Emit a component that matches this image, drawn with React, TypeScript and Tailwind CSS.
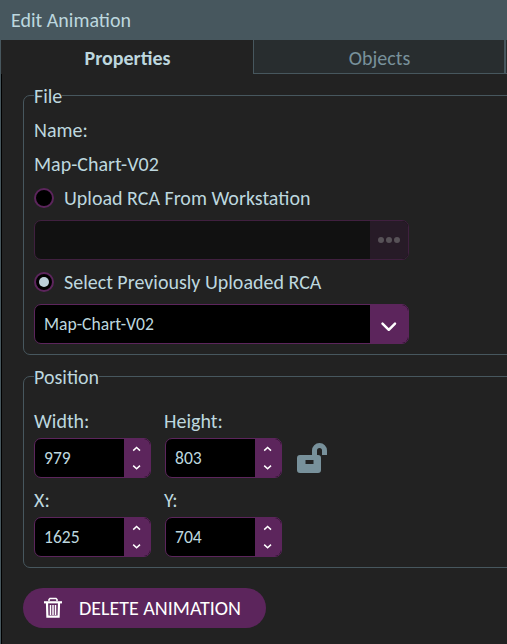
import React from "react";

function Spinner({ value }: { value: string }) {
  return (
    <div className="flex h-10 w-[117px] overflow-hidden rounded-[7px] border border-[#5c255c] bg-black">
      <div className="flex flex-1 items-center pt-[2px] pl-[9px] text-[17.6px] leading-none">{value}</div>
      <div className="flex w-[26px] flex-col items-center justify-between bg-[#5c255c] py-[7px]">
        <svg width="10" height="6" viewBox="0 0 10 6" fill="none" stroke="#fff" strokeWidth="1.5">
          <path d="M1.2 4.6 4.6 1.5l3.4 3.1" />
        </svg>
        <svg width="10" height="6" viewBox="0 0 10 6" fill="none" stroke="#fff" strokeWidth="1.5">
          <path d="M1.2 1.6 4.6 4.7 8 1.6" />
        </svg>
      </div>
    </div>
  );
}

function Radio({ checked }: { checked?: boolean }) {
  return (
    <span className="flex size-5 shrink-0 items-center justify-center rounded-full border-2 border-[#5c255c] bg-black">
      {checked && <span className="size-[10px] rounded-full bg-[#bdd0d9]" />}
    </span>
  );
}

function Field({ label, value }: { label: string; value: string }) {
  return (
    <div className="group flex w-[117px] flex-col gap-[5px]">
      <div className="-ml-px h-[22px] leading-[20px] group-first:ml-0">{label}</div>
      <Spinner value={value} />
    </div>
  );
}

export default function App() {
  return (
    <div className="h-[644px] w-[507px] overflow-hidden bg-[#222] font-['Carlito','Lato','Liberation_Sans',sans-serif] text-[20px] whitespace-nowrap text-[#bdd7df]">
      <header className="flex h-10 items-center bg-[#47575e] pl-[11px]">Edit Animation</header>
      <div className="h-[604px] border-l border-[#47575e]">
        <nav className="flex h-[34px]">
          <div className="flex w-[252px] items-center justify-center pt-px pl-px font-bold">Properties</div>
          <div className="flex w-[253px] items-center justify-center border-r-2 border-b border-l border-[#47575e] bg-[#282d2f] pt-[2px] pl-px text-[#78919b]">
            Objects
          </div>
          <div className="flex-1 border-b border-[#47575e] bg-[#282d2f]" />
        </nav>
        <main className="h-[570px] border-l border-black pt-[11px] pl-[21px]">
          <fieldset className="h-[270px] w-[520px] rounded-[7px] border border-[#47575e] px-[10px]">
            <legend className="h-[21px] leading-[22px]">File</legend>
            <div className="pt-[7px]">
              <div className="h-[34px] leading-[34px]">Name:</div>
              <div className="h-[34px] leading-[34px]">Map-Chart-V02</div>
              <label className="flex h-[34px] items-center gap-[10px]">
                <Radio />
                <span>Upload RCA From Workstation</span>
              </label>
              <div className="mt-[5px] flex h-10 w-[375px] overflow-hidden rounded-[7px] border border-[#40203f] bg-[#111]">
                <div className="flex-1" />
                <div className="flex w-[38px] items-center justify-center gap-[1.6px] bg-[#271b27]">
                  <span className="size-[6.4px] rounded-full bg-[#575157]" />
                  <span className="size-[6.4px] rounded-full bg-[#575157]" />
                  <span className="size-[6.4px] rounded-full bg-[#575157]" />
                </div>
              </div>
              <label className="mt-[5px] flex h-[34px] items-center gap-[10px]">
                <Radio checked />
                <span>Select Previously Uploaded RCA</span>
              </label>
              <div className="mt-[5px] flex h-10 w-[375px] overflow-hidden rounded-[7px] border border-[#5c255c] bg-black">
                <div className="flex flex-1 items-center pt-px pl-[9px] text-[17.6px]">Map-Chart-V02</div>
                <div className="flex w-[38px] items-center justify-center bg-[#5c255c] pt-[5px]">
                  <svg width="18" height="12" viewBox="0 0 18 12" fill="none" stroke="#fff" strokeWidth="2.5" strokeLinecap="round" strokeLinejoin="round">
                    <path d="M2.5 2.6 8.8 8.8 15 2.6" />
                  </svg>
                </div>
              </div>
            </div>
          </fieldset>
          <fieldset className="mt-[11px] h-[202px] w-[520px] rounded-[7px] border border-[#47575e] px-[10px]">
            <legend className="h-[21px] leading-[22px]">Position</legend>
            <div className="flex gap-[14px] pt-[24px]">
              <Field label="Width:" value="979" />
              <Field label="Height:" value="803" />
              <svg className="mt-[32px]" width="32" height="31" viewBox="0 0 32 31" fill="none">
                <path fill="#78919b" fillRule="evenodd" d="M4 12h18a3 3 0 0 1 3 3v12a3 3 0 0 1-3 3H4a3 3 0 0 1-3-3V15a3 3 0 0 1 3-3Zm5.5 5v4h8v-4Z" />
                <path stroke="#78919b" strokeWidth="5" d="M18.5 13V7.5a5 5 0 0 1 10 0V12" />
              </svg>
            </div>
            <div className="mt-3 flex gap-[14px]">
              <Field label="X:" value="1625" />
              <Field label="Y:" value="704" />
            </div>
          </fieldset>
          <button className="mt-5 flex h-10 w-[243px] items-center rounded-full bg-[#5c255c] pl-5 text-white">
            <svg width="20" height="22" viewBox="0 0 20 22" fill="none" stroke="#fff">
              <path strokeWidth="1.5" d="M6 4V2.5L7 1.5h6l1 1V4" />
              <path strokeWidth="2.2" d="M1 5.3h18" />
              <path strokeWidth="2.2" d="M4 6l.4 13.7h11.2L16 6" />
              <path strokeWidth="1.5" d="M7.5 8v10M10 8v10M12.5 8v10" />
            </svg>
            <span className="ml-[16px]">DELETE ANIMATION</span>
          </button>
        </main>
      </div>
    </div>
  );
}
